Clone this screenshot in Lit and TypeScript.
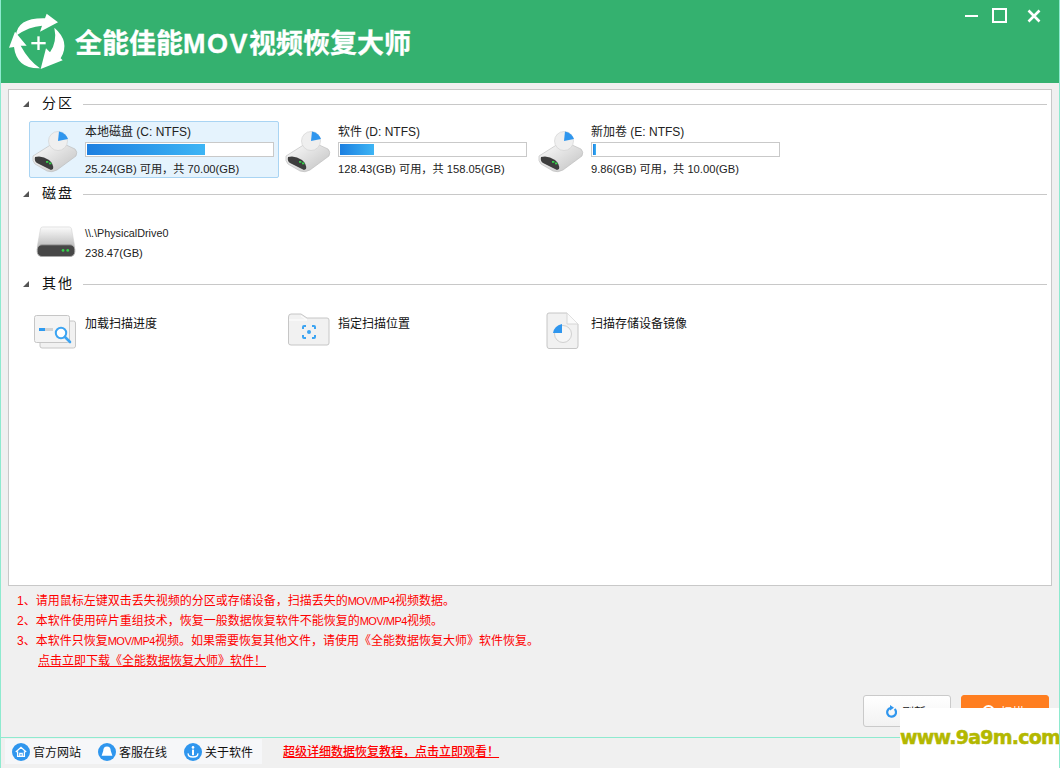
import { LitElement, css, html, svg, type TemplateResult } from 'lit';
import { customElement } from 'lit/decorators.js';

const volumeIcon = svg`
  <svg class="tile-icon vol-icon" viewBox="0 0 46 42" width="46" height="42">
    <defs>
      <linearGradient id="vg" x1="0" y1="0" x2="1" y2="1">
        <stop offset="0" stop-color="#ffffff" /><stop offset="1" stop-color="#c0c0c0" />
      </linearGradient>
    </defs>
    <path d="M1 25 L20 13 Q26 10 32 13 L43 18 Q46 21 44 25 L25 39 Q20 42 15 40 L3 33 Q0 30 1 25 Z" fill="url(#vg)" stroke="#b9b9b9" stroke-width=".6" />
    <path d="M3 26 Q10 24 17 29 Q22 33 21 38 L19 39 L5 32 Q2 30 3 26 Z" fill="#3d3d3d" />
    <rect x="14" y="30" width="2.4" height="1.8" fill="#35d04a" />
    <rect x="17" y="31.5" width="2.4" height="1.8" fill="#35d04a" />
    <circle cx="26" cy="10" r="9.5" fill="#efefef" stroke="#cfcfcf" stroke-width=".6" />
    <path d="M26 10 L27 .5 Q34 2 36 8 Z" fill="#2f96ee" />
  </svg>`;

const diskIcon = svg`
  <svg class="tile-icon disk-icon" viewBox="0 0 42 33" width="40" height="31">
    <defs>
      <linearGradient id="dg" x1="0" y1="0" x2="0" y2="1">
        <stop offset="0" stop-color="#fbfbfb" /><stop offset="1" stop-color="#bdbdbd" />
      </linearGradient>
    </defs>
    <path d="M7 1 H35 Q37 1 37.5 3 L41 22 H1 L4.5 3 Q5 1 7 1 Z" fill="url(#dg)" stroke="#d0d0d0" stroke-width=".6" />
    <rect x="1" y="20" width="40" height="12.5" rx="5" fill="#474747" stroke="#a8a8a8" />
    <circle cx="28.5" cy="26" r="1.5" fill="#35d04a" />
    <circle cx="33.5" cy="26" r="1.5" fill="#35d04a" />
  </svg>`;

const progressIcon = svg`
  <svg class="tile-icon progress-icon" viewBox="0 0 42 34" width="42" height="34">
    <rect x="6" y="6" width="35.5" height="27" rx="2" fill="#f1f1f1" stroke="#c6c6c6" />
    <rect x=".5" y=".5" width="35" height="27" rx="2" fill="#f4f4f4" stroke="#c6c6c6" />
    <rect x="5" y="13" width="6" height="3" fill="#2f9bf0" />
    <rect x="11" y="13" width="8" height="3" fill="#d3d3d3" />
    <circle cx="27" cy="18" r="5.2" fill="#fff" stroke="#3ca4f2" stroke-width="2" />
    <path d="M31 22 L36 27" stroke="#3ca4f2" stroke-width="2.6" stroke-linecap="round" />
  </svg>`;

const folderIcon = svg`
  <svg class="tile-icon folder-icon" viewBox="0 0 42 34" width="42" height="34">
    <path d="M.5 4 Q.5 1 3 1 H13 L19 5 H39 Q41 5 41 7 V30 Q41 32 39 32 H3 Q.5 32 .5 30 Z" fill="#f1f1f1" stroke="#c6c6c6" />
    <path d="M1 7 H19 L13 3" fill="none" stroke="#fff" />
    <path d="M15 16 V14 Q15 13 16 13 H18 M24 13 H26 Q27 13 27 14 V16 M27 22 V24 Q27 25 26 25 H24 M18 25 H16 Q15 25 15 24 V22" fill="none" stroke="#3ca4f2" stroke-width="2" />
    <circle cx="21" cy="19" r="2" fill="#3ca4f2" />
  </svg>`;

const imageIcon = svg`
  <svg class="tile-icon image-icon" viewBox="0 0 33 38" width="33" height="38">
    <path d="M3 1 H21 L32 12 V34 Q32 36.5 30 36.5 H3 Q1 36.5 1 34 V3 Q1 1 3 1 Z" fill="#f1f1f1" stroke="#c6c6c6" />
    <path d="M21 1 V12 H32" fill="#fafafa" stroke="#d6d6d6" />
    <circle cx="17" cy="22" r="8.5" fill="#f6f6f6" stroke="#d0d0d0" />
    <path d="M16 21 H7 Q8 14 16 12 Z" fill="#2f96ee" />
  </svg>`;

const logo = svg`
  <svg class="logo" viewBox="0 0 240 225" width="80" height="75">
    <g fill="#fff">
      <path d="M48 92 Q52 38 135 40 L140 26 L174 52 L120 80 L126 62 Q88 64 48 92 Z" />
      <path d="M163 68 Q212 110 182 160 L188 166 L122 192 L138 130 L150 142 Q172 110 163 68 Z" />
      <path d="M120 190 Q50 192 42 126 L27 128 L45 80 L80 122 L62 122 Q85 165 120 190 Z" />
      <rect x="94" y="111" width="43" height="7" />
      <rect x="112" y="94" width="7" height="41" />
    </g>
  </svg>`;

const homeIcon = svg`
  <svg viewBox="0 0 18 18" width="18" height="18">
    <circle cx="9" cy="9" r="9" fill="#2f96ee" />
    <path d="M3.8 9 L9 4.3 L14.2 9 M5.6 8.4 V13.4 H12.4 V8.4 M7.8 13.4 V10.4 H10.2 V13.4" fill="none" stroke="#fff" stroke-width="1.3" />
  </svg>`;

const serviceIcon = svg`
  <svg viewBox="0 0 18 18" width="18" height="18">
    <circle cx="9" cy="9" r="9" fill="#2f96ee" />
    <path d="M9 3.6 Q12.6 3.6 12.8 8 L14.4 12.8 H3.6 L5.2 8 Q5.4 3.6 9 3.6 Z" fill="#fff" />
  </svg>`;

const infoIcon = svg`
  <svg viewBox="0 0 18 18" width="18" height="18">
    <circle cx="9" cy="9" r="9" fill="#2f96ee" />
    <circle cx="9" cy="4.4" r="1.3" fill="#fff" />
    <rect x="8" y="6.6" width="2" height="5.6" fill="#fff" />
    <path d="M4.2 10.4 Q3.8 14 9 14 Q14.2 14 13.8 10.4" fill="none" stroke="#fff" stroke-width="1.4" />
  </svg>`;

const refreshIcon = svg`
  <svg viewBox="0 0 12 13" width="12" height="13">
    <path d="M9.6 4 A4.4 4.4 0 1 1 5.4 3" fill="none" stroke="#2f96ee" stroke-width="2.2" />
    <path d="M5 0 L9 2.8 L5 5.4 Z" fill="#2f96ee" />
  </svg>`;

const volumes = [
  { name: '本地磁盘', label: '(C: NTFS)', free: '25.24', total: '70.00', pct: 64, active: true },
  { name: '软件', label: '(D: NTFS)', free: '128.43', total: '158.05', pct: 18.5, active: false },
  { name: '新加卷', label: '(E: NTFS)', free: '9.86', total: '10.00', pct: 1.5, active: false },
];

const others = [
  { icon: progressIcon, name: '加载扫描进度' },
  { icon: folderIcon, name: '指定扫描位置' },
  { icon: imageIcon, name: '扫描存储设备镜像' },
];

@customElement('app-root')
export class AppRoot extends LitElement {
  private sectionHead(title: string): TemplateResult {
    return html`
      <div class="section-head">
        <span class="caret"></span>
        <span class="section-title">${title}</span>
        <span class="rule"></span>
      </div>
    `;
  }

  override render(): TemplateResult {
    return html`
      <header class="titlebar">
        <div class="brand">${logo}<h1>全能佳能<span class="mov">MOV</span>视频恢复大师</h1></div>
        <div class="win-btns">
          <span class="win-min"></span>
          <span class="win-max"></span>
          <svg viewBox="0 0 14 14" width="14" height="14">
            <path d="M1.5 1.5 L12.5 12.5 M12.5 1.5 L1.5 12.5" stroke="#fff" stroke-width="2.6" />
          </svg>
        </div>
      </header>

      <main class="panel">
        ${this.sectionHead('分区')}
        <div class="tiles">
          ${volumes.map(
            (v) => html`
              <div class="tile ${v.active ? 'active' : ''}">
                <div class="icon-slot">${volumeIcon}</div>
                <div class="tile-body">
                  <div class="vol-name">${v.name} ${v.label}</div>
                  <div class="bar"><div class="fill" style="width:${v.pct}%"></div></div>
                  <div class="vol-size">${v.free}(GB) 可用，共 ${v.total}(GB)</div>
                </div>
              </div>
            `,
          )}
        </div>
        ${this.sectionHead('磁盘')}
        <div class="tiles">
          <div class="tile">
            <div class="icon-slot">${diskIcon}</div>
            <div class="tile-body disk-body">
              <div class="drive-name">\\\\.\\PhysicalDrive0</div>
              <div class="vol-size">238.47(GB)</div>
            </div>
          </div>
        </div>
        ${this.sectionHead('其他')}
        <div class="tiles">
          ${others.map(
            (o) => html`
              <div class="tile">
                <div class="icon-slot">${o.icon}</div>
                <div class="tile-body other-body">${o.name}</div>
              </div>
            `,
          )}
        </div>
      </main>

      <section class="notes">
        <p>1、请用鼠标左键双击丢失视频的分区或存储设备，扫描丢失的<span class="latin">MOV/MP4</span>视频数据。</p>
        <p>2、本软件使用碎片重组技术，恢复一般数据恢复软件不能恢复的<span class="latin">MOV/MP4</span>视频。</p>
        <p>3、本软件只恢复<span class="latin">MOV/MP4</span>视频。如果需要恢复其他文件，请使用《全能数据恢复大师》软件恢复。</p>
        <p class="download"><a>点击立即下载《全能数据恢复大师》软件！</a></p>
      </section>

      <div class="actions">
        <button class="btn">${refreshIcon}<span>刷新</span></button>
        <button class="btn primary"><span class="scan-dot"></span><span>扫描</span></button>
      </div>

      <footer class="statusbar">
        <div class="links">
          <span class="link">${homeIcon}官方网站</span>
          <span class="link">${serviceIcon}客服在线</span>
          <span class="link">${infoIcon}关于软件</span>
        </div>
        <a class="tutorial">超级详细数据恢复教程，点击立即观看！</a>
      </footer>

      <div class="watermark">www.9a9m.com</div>
    `;
  }

  static override styles = css`
    :host {
      display: flex;
      flex-direction: column;
      position: relative;
      width: 1060px;
      height: 768px;
      box-sizing: border-box;
      overflow: hidden;
      background: #f0f0f0;
      border-left: 1px solid #8eeacf;
      border-right: 1px solid #8eeacf;
      font-family: 'Liberation Sans', 'Noto Sans CJK SC', sans-serif;
      font-size: 12px;
      color: #1a1a1a;
    }
    .titlebar {
      flex: none;
      height: 83px;
      margin: 0 -1px;
      background: #34b16f;
      display: flex;
      justify-content: space-between;
    }
    .brand {
      display: flex;
      align-items: center;
    }
    .logo { margin: 2px -5px 0 0; flex: none; }
    h1 {
      margin: 0;
      font-size: 27px;
      font-weight: 700;
      color: #fff;
      -webkit-text-stroke: 0.3px #fff;
    }
    .mov { letter-spacing: 1.5px; }
    .win-btns {
      display: flex;
      align-items: center;
      align-self: flex-start;
      height: 15px;
      margin-top: 8px;
      padding-right: 19px;
    }
    .win-min { width: 13px; height: 2px; background: #fff; margin-right: 14px; }
    .win-max {
      box-sizing: border-box;
      width: 15px;
      height: 15px;
      border: 2px solid #fff;
      margin-right: 20px;
    }
    .panel {
      flex: none;
      box-sizing: border-box;
      height: 497px;
      margin: 6px 7px 0 7px;
      background: #fff;
      border: 1px solid #c8c8c8;
      padding-left: 14px;
      padding-right: 4px;
    }
    .section-head {
      display: flex;
      align-items: center;
      height: 26px;
      margin-bottom: 5px;
    }
    .caret {
      width: 0;
      height: 0;
      margin-top: 2px;
      border-left: 6px solid transparent;
      border-bottom: 6px solid #555;
    }
    .section-title {
      margin: -2px 0 0 13px;
      font-size: 14px;
      letter-spacing: 2px;
      color: #111;
    }
    .rule { flex: 1; height: 1px; margin: 3px 0 0 9px; background: #c8c8c8; }
    .tiles {
      display: flex;
      gap: 3px;
      margin-left: 6px;
      height: 57px;
      margin-bottom: 2px;
    }
    .tile {
      box-sizing: border-box;
      width: 250px;
      height: 57px;
      display: flex;
      border: 1px solid transparent;
      border-radius: 2px;
    }
    .tile.active { background: #e5f3fd; border-color: #a9d4f3; }
    .icon-slot {
      flex: none;
      width: 55px;
      display: flex;
      align-items: center;
      justify-content: center;
      padding-right: 4px;
      box-sizing: border-box;
    }
    .tile-icon { display: block; }
    .vol-icon { margin: 5px 1px 0 0; }
    .disk-icon { margin-top: 3px; }
    .progress-icon { margin: 4px 2px 0 0; }
    .folder-icon { margin-top: 1px; }
    .image-icon { margin: 3px 0 0 2px; }
    .tile-body { flex: 1; }
    .vol-name {
      height: 20px;
      line-height: 20px;
      font-size: 12px;
      color: #222;
    }
    .bar {
      box-sizing: border-box;
      width: 189px;
      height: 15px;
      border: 1px solid #c9c9c9;
      background: #fff;
      padding: 1px;
    }
    .fill {
      height: 100%;
      background: linear-gradient(90deg, #1c7fe0, #3db5f5);
    }
    .vol-size {
      margin-top: 5px;
      font-size: 11.2px;
      line-height: 15px;
      color: #222;
    }
    .disk-body { padding-top: 14px; }
    .drive-name { font-size: 10.8px; line-height: 15px; color: #222; }
    .disk-body .vol-size { margin-top: 5px; }
    .other-body { padding-top: 14px; font-size: 12px; line-height: 17px; color: #111; }
    .notes {
      flex: none;
      margin-top: 5px;
      padding-left: 16px;
      color: #f00;
      font-size: 12px;
      line-height: 20px;
    }
    .notes p { margin: 0; height: 20px; overflow: visible; }
    .notes .latin { font-size: 11px; letter-spacing: -0.5px; }
    .notes .download { padding-left: 21px; }
    .download a { text-decoration: underline; }
    .actions {
      flex: none;
      display: flex;
      justify-content: flex-end;
      gap: 10px;
      margin-top: 24px;
      padding-right: 10px;
    }
    .btn {
      box-sizing: border-box;
      width: 88px;
      height: 32px;
      display: flex;
      align-items: center;
      justify-content: center;
      gap: 5px;
      padding: 0 3px 0 0;
      font: inherit;
      color: #222;
      background: linear-gradient(#ffffff, #f2f2f2);
      border: 1px solid #cacaca;
      border-radius: 3px;
    }
    .btn.primary { background: #ff7e20; border-color: #ff7e20; color: #fff; }
    .scan-dot { width: 9px; height: 9px; border: 2px solid #fff; border-radius: 50%; }
    .statusbar {
      flex: none;
      box-sizing: border-box;
      height: 31px;
      margin: 10px -1px 0;
      border-top: 1px solid #8eeacf;
      display: flex;
      align-items: flex-start;
    }
    .links {
      display: flex;
      height: 25px;
      margin: 1px 0 0 5px;
      padding-left: 7px;
      padding-right: 9px;
      gap: 17px;
      align-items: center;
      background: #f6f7f9;
    }
    .link { display: flex; align-items: center; gap: 3px; color: #111; font-size: 12px; }
    .tutorial {
      margin: 5px 0 0 21px;
      line-height: 19px;
      color: #f00;
      font-size: 12px;
      font-weight: 500;
      text-decoration: underline;
    }
    .watermark {
      position: absolute;
      right: -1px;
      bottom: 0;
      width: 160px;
      height: 60px;
      box-sizing: border-box;
      padding-top: 18px;
      background: #fff;
      color: #b3b800;
      font-family: 'DejaVu Sans', sans-serif;
      font-size: 19px;
      font-weight: 700;
      white-space: nowrap;
      letter-spacing: -0.75px;
      -webkit-text-stroke: 0.5px #b3b800;
    }
  `;
}

declare global {
  interface HTMLElementTagNameMap {
    'app-root': AppRoot;
  }
}
